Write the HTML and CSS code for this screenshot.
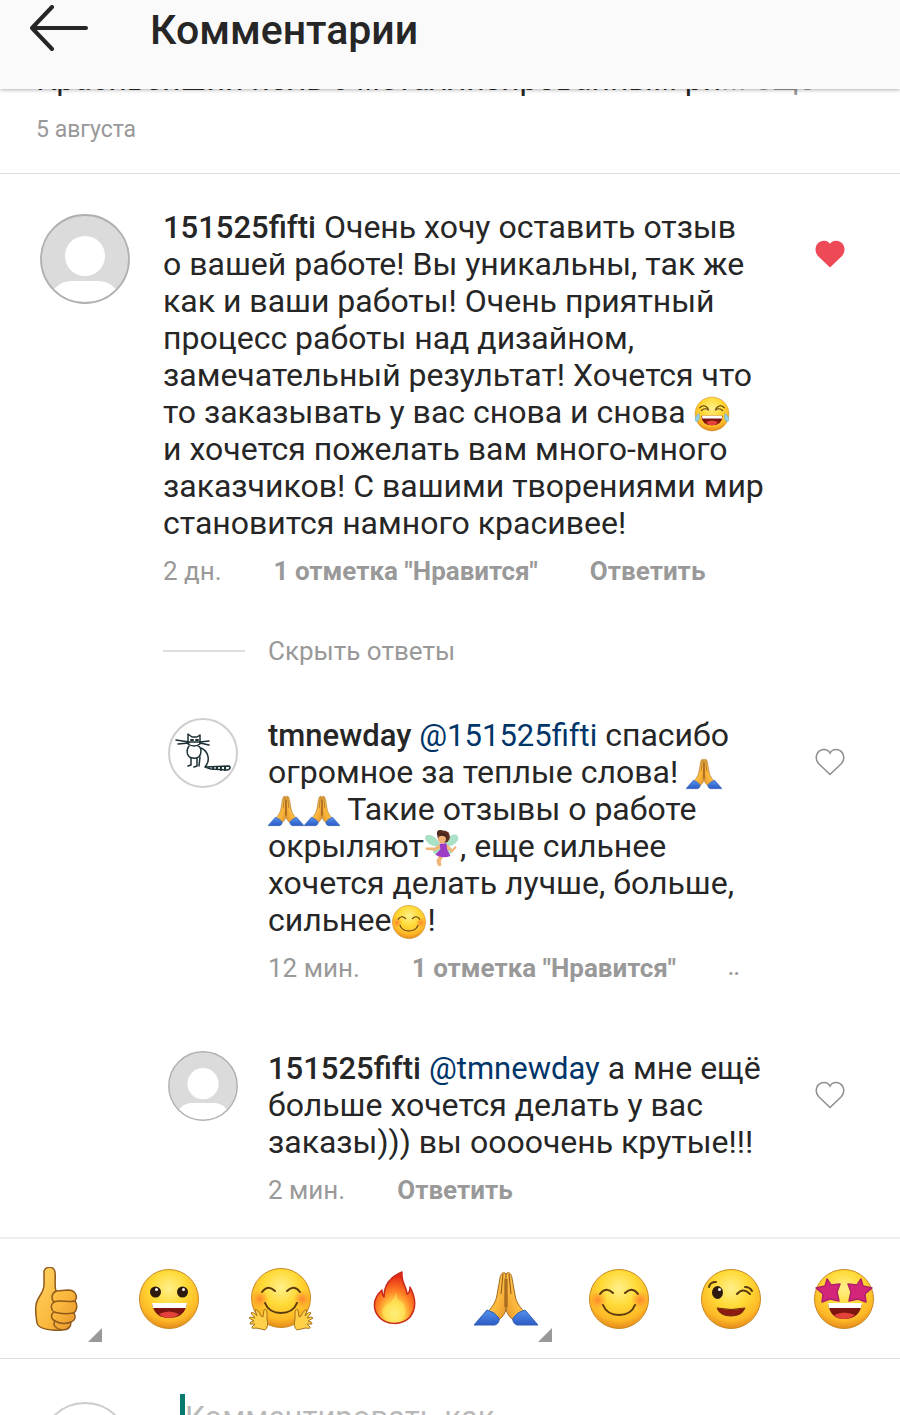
FILE: index.html
```html
<!DOCTYPE html>
<html lang="ru">
<head>
    <meta charset="UTF-8">
    <meta name="viewport" content="width=device-width, initial-scale=1.0">
    <title>Комментарии</title>
    <link rel="stylesheet" href="styles.css">
</head>
<body>
    <!-- Shared icons -->
    <svg class="sprite" aria-hidden="true">
        <defs>
            <radialGradient id="face" cx="50%" cy="32%" r="68%">
                <stop offset="0" stop-color="#fff08c"/>
                <stop offset="0.45" stop-color="#ffd935"/>
                <stop offset="0.8" stop-color="#fdb827"/>
                <stop offset="1" stop-color="#e58a1a"/>
            </radialGradient>
            <radialGradient id="blush">
                <stop offset="0" stop-color="#ff7a2c" stop-opacity="0.85"/>
                <stop offset="1" stop-color="#ff8c2c" stop-opacity="0"/>
            </radialGradient>
            <linearGradient id="skin" x1="0" y1="0" x2="1" y2="1">
                <stop offset="0" stop-color="#ffd465"/>
                <stop offset="0.6" stop-color="#fbb73c"/>
                <stop offset="1" stop-color="#e5932b"/>
            </linearGradient>
            <radialGradient id="flame" cx="50%" cy="82%" r="75%">
                <stop offset="0" stop-color="#fff9b0"/>
                <stop offset="0.3" stop-color="#ffd84a"/>
                <stop offset="0.58" stop-color="#ff8425"/>
                <stop offset="1" stop-color="#e52916"/>
            </radialGradient>
            <linearGradient id="sleeve" x1="0" y1="0" x2="0" y2="1">
                <stop offset="0" stop-color="#5591ee"/>
                <stop offset="1" stop-color="#2b5bc4"/>
            </linearGradient>
        </defs>

        <symbol id="person" viewBox="0 0 90 90">
            <clipPath id="round"><circle cx="45" cy="45" r="44"/></clipPath>
            <circle cx="45" cy="45" r="44" fill="#dbdbdb"/>
            <g clip-path="url(#round)" fill="#fff">
                <circle cx="45" cy="42" r="20"/>
                <path d="M10 82C16 70 24 67 32 67H58C66 67 74 70 80 82L70 94H20Z"/>
            </g>
            <circle cx="45" cy="45" r="44" fill="none" stroke="#b0b0b0" stroke-width="1.8"/>
        </symbol>

        <symbol id="cat" viewBox="0 0 70 70">
            <circle cx="35" cy="35" r="34" fill="#fff" stroke="#cfcfcf" stroke-width="2"/>
            <g fill="none" stroke="#1c2f35" stroke-width="1.5" stroke-linecap="round" stroke-linejoin="round">
                <path d="M20 26V16L24 19H29L32 17V26Q26 30 20 26Z"/>
                <path d="M8 22L21 24M10 26L21 25M41 23L32 24M41 27L32 25M21 24H32"/>
                <path d="M23 22H25M28 22H30" stroke-width="2"/>
                <path d="M21 28C17 34 20 40 25 40C30 41 33 38 33 33C33 30 31 28 30 28"/>
                <path d="M33 30C40 33 43 42 37 49L61 48C63 49 62 52 59 52L43 51L37 49"/>
                <path d="M23 40V47L20 48M29 40V48L26 49M32 39L31 48"/>
                <path d="M45 49V51M49 49V51M53 49V52M57 49V52" stroke-width="2"/>
            </g>
        </symbol>

        <symbol id="heart" viewBox="0 0 30 28">
            <path d="M15 26.500L3.500 15.500C-0.500 11 1 3.500 7 1.800C10.500 0.900 13.500 2.600 15 5.200C16.500 2.600 19.500 0.900 23 1.800C29 3.500 30.500 11 26.500 15.500Z"/>
        </symbol>

        <symbol id="joy" viewBox="0 0 64 64">
            <circle cx="32" cy="32" r="30" fill="url(#face)" stroke="#c98a22"/>
            <path d="M10 21Q18 13 25 22M39 22Q47 13 54 21M13 26Q19 20 26 25M38 25Q45 20 51 26" fill="none" stroke="#5b3a10" stroke-width="2" stroke-linecap="round"/>
            <path d="M13 35H51Q50 52 32 52Q14 52 13 35Z" fill="#7c1410"/>
            <path d="M21 47Q32 40 43 47Q38 52 32 52Q26 52 21 47Z" fill="#e2423a"/>
            <path d="M14 35H50V40H15Z" fill="#fff"/>
            <path d="M9 31C3 34 1 41 3 45C7 47 11 42 9 31ZM55 31C61 34 63 41 61 45C57 47 53 42 55 31Z" fill="#8fd0e6" stroke="#6bb2cc"/>
        </symbol>

        <symbol id="blushing" viewBox="0 0 64 64">
            <circle cx="32" cy="32" r="29.500" fill="url(#face)" stroke="#c98a22"/>
            <circle cx="11" cy="33" r="9" fill="url(#blush)"/>
            <circle cx="53" cy="33" r="9" fill="url(#blush)"/>
            <path d="M13 27Q19 19 26 26M38 26Q45 19 51 27M16 38Q20 48 32 48Q44 48 48 38" fill="none" stroke="#5b3a10" stroke-width="2" stroke-linecap="round"/>
        </symbol>

        <symbol id="grin" viewBox="0 0 64 64">
            <circle cx="32" cy="32" r="29.500" fill="url(#face)" stroke="#c98a22"/>
            <circle cx="18.500" cy="25" r="5.500" fill="#2c1a0e"/>
            <circle cx="45.500" cy="25" r="5.500" fill="#2c1a0e"/>
            <circle cx="19.500" cy="22.500" r="1.500" fill="#fff"/>
            <circle cx="46.500" cy="22.500" r="1.500" fill="#fff"/>
            <path d="M15 36H50Q48 51 32 51Q17 51 15 36Z" fill="#7c1410"/>
            <path d="M22 47Q32 42 42 47Q38 51 32 51Q26 51 22 47Z" fill="#e2423a"/>
            <path d="M15 36H50L49 41H16Z" fill="#fff"/>
        </symbol>

        <symbol id="hug" viewBox="0 0 64 64">
            <circle cx="32" cy="31" r="29.500" fill="url(#face)" stroke="#c98a22"/>
            <circle cx="11" cy="32" r="9" fill="url(#blush)"/>
            <circle cx="53" cy="32" r="9" fill="url(#blush)"/>
            <path d="M13 25Q19 17 26 24M38 24Q45 17 51 25M16 36Q20 46 32 46Q44 46 48 36" fill="none" stroke="#5b3a10" stroke-width="2" stroke-linecap="round"/>
            <g id="palm" fill="#ffd04a" stroke="#a8741c" stroke-linejoin="round">
                <path d="M12 62L7 61Q2 62 3 60L6 57L1 57Q0 55 5 54L0 51Q1 49 6 51L2 46Q4 44 8 49L6 43Q9 42 12 49L14 50L15 43Q18 41 18 46L18 52Q20 60 16 63Z"/>
            </g>
            <use href="#palm" transform="translate(64 0) scale(-1 1)"/>
        </symbol>

        <symbol id="wink" viewBox="0 0 64 64">
            <circle cx="32" cy="32" r="29.500" fill="url(#face)" stroke="#c98a22"/>
            <ellipse cx="18.500" cy="25.500" rx="5.500" ry="6.500" fill="#2c1a0e"/>
            <circle cx="20.500" cy="22.500" r="1.500" fill="#fff"/>
            <path d="M10 20Q11 15 17 15M38 27Q44 20 51 27M46 20Q51 20 53 24" fill="none" stroke="#5b3a10" stroke-width="2" stroke-linecap="round"/>
            <path d="M18 41Q32 44 46 41Q43 49 32 49Q21 49 18 41Z" fill="#8c1a10" stroke="#6d2a10"/>
        </symbol>

        <symbol id="starry" viewBox="0 0 64 64">
            <circle cx="32" cy="32" r="29.500" fill="url(#face)" stroke="#c98a22"/>
            <path id="star" d="M15 12L19 18L28 17L25 25L27 34L18 32L10 35L11 27L4 21L13 19Z" fill="#d3267a" stroke="#b01f68" stroke-width="1.5" stroke-linejoin="round"/>
            <use href="#star" transform="translate(64 0) scale(-1 1)"/>
            <path d="M16 36H50Q48 52 32 52Q18 52 16 36Z" fill="#7c1410"/>
            <path d="M22 48Q32 43 43 48Q38 52 32 52Q26 52 22 48Z" fill="#e2423a"/>
            <path d="M16 36H50L49 41H17Z" fill="#fff"/>
        </symbol>

        <symbol id="thumb" viewBox="0 0 64 64">
            <g fill="url(#skin)" stroke="#8f5a1c" stroke-width="1.500" stroke-linejoin="round">
                <path d="M20 4C22-1 30-1 31 5C32 12 30 18 32 24L44 23C52 23 54 30 51 34C54 38 53 43 50 46C52 50 51 54 47 55C47 60 44 63 38 63C27 64 14 62 13 56C12 50 11 44 12 38C13 30 20 26 20 18Z"/>
                <path d="M32 24C27 27 27 32 30 35C26 38 27 43 30 45C26 48 27 52 31 54C28 58 32 62 38 63" fill="none"/>
                <path d="M30 35C36 32 44 36 51 34M30 45C36 47 44 47 50 46M31 54C36 57 42 57 47 55" fill="none"/>
            </g>
        </symbol>

        <symbol id="fire" viewBox="0 0 64 64">
            <path d="M40 5C39 17 45 19 45 27C48 26 48 23 48 20C54 31 54 42 48 50C40 59 24 58 17 50C10 42 11 31 20 23C20 27 21 29 22 30C22 19 28 10 40 5Z" fill="url(#flame)" stroke="#c9281a" stroke-width="1.500" stroke-linejoin="round"/>
            <path d="M34 26C35 36 40 34 41 36C49 52 34 56 28 54C16 50 20 38 27 37C31 34 32 31 34 26Z" fill="#ffe65a" opacity="0.6"/>
        </symbol>

        <symbol id="pray" viewBox="0 0 64 64">
            <g id="hand">
                <path d="M31 6C28 5 27 7 26 11L23 28C22 36 16 42 14 45L25 53C29 49 32 46 32 40V7Z" fill="url(#skin)" stroke="#a16a21"/>
                <path d="M29 7L27 27M31 12V40" fill="none" stroke="#8c541b"/>
                <path d="M13 43L0 58H21Q26 56 25 51Q21 45 13 43Z" fill="url(#sleeve)" stroke="#3261b8"/>
            </g>
            <use href="#hand" transform="translate(64 0) scale(-1 1)"/>
        </symbol>

        <symbol id="fairy" viewBox="0 0 64 64">
            <path d="M28 26C18 6 0 6 3 16C7 26 18 28 26 29C16 31 14 40 20 42C27 42 30 36 32 30ZM36 26C46 4 62 6 60 16C57 26 48 27 40 29C50 30 53 38 47 42C40 43 37 36 36 30Z" fill="#a9e2c4" stroke="#8accae"/>
            <path d="M27 44L22 55L25 64H31L30 55L36 45ZM28 25L20 31L3 31V35L21 37L30 32ZM40 25L50 34L56 28L58 31L50 40L38 32Z" fill="#f0b678"/>
            <path d="M28 24H40L41 34L47 46Q34 52 20 44L29 34Z" fill="#9c3cc6"/>
            <circle cx="29" cy="6" r="6" fill="#46251a"/>
            <circle cx="35" cy="12" r="11" fill="#5b3020"/>
            <ellipse cx="32" cy="16" rx="7" ry="8" fill="#efb176"/>
            <path d="M24 14Q31 6 41 14L40 7L30 5Z" fill="#46251a"/>
        </symbol>
    </svg>

    <div class="app">
        <header class="top-bar">
            <button type="button" class="back" aria-label="Назад">
                <svg viewBox="0 0 60 46"><path d="M23 2L3 23L23 44M3 23H57"/></svg>
            </button>
            <h1>Комментарии</h1>
        </header>

        <section class="post-caption">
            <p>Красивейший ноль с металлизированным ри<span>... ещё</span></p>
            <time>5 августа</time>
        </section>

        <main class="comments">
            <article class="comment">
                <svg class="avatar"><use href="#person"/></svg>
                <div class="comment-body">
                    <p><b>151525fifti</b> Очень хочу оставить отзыв о&nbsp;вашей работе! Вы уникальны, так же как&nbsp;и ваши работы! Очень приятный процесс работы над дизайном, замечательный результат! Хочется что то&nbsp;заказывать у вас снова и снова <svg class="emoji"><use href="#joy"/></svg> и&nbsp;хочется пожелать вам много-много заказчиков! С вашими творениями мир становится намного красивее!</p>
                    <div class="meta">
                        <span>2 дн.</span>
                        <button type="button">1 отметка "Нравится"</button>
                        <button type="button">Ответить</button>
                    </div>
                </div>
                <button type="button" class="like liked" aria-label="Не нравится"><svg><use href="#heart"/></svg></button>
            </article>

            <button type="button" class="toggle-replies">Скрыть ответы</button>

            <article class="comment reply">
                <svg class="avatar"><use href="#cat"/></svg>
                <div class="comment-body">
                    <p><b>tmnewday</b> <a href="#">@151525fifti</a> спасибо огромное за теплые слова! <svg class="emoji"><use href="#pray"/></svg> <span class="pair"><svg class="emoji"><use href="#pray"/></svg><svg class="emoji"><use href="#pray"/></svg></span> Такие отзывы о работе окрыляют<svg class="emoji"><use href="#fairy"/></svg>, еще сильнее хочется делать лучше, больше, сильнее<svg class="emoji"><use href="#blushing"/></svg>!</p>
                    <div class="meta">
                        <span>12 мин.</span>
                        <button type="button">1 отметка "Нравится"</button>
                        <button type="button" class="more" aria-label="Ответить">..</button>
                    </div>
                </div>
                <button type="button" class="like" aria-label="Нравится"><svg><use href="#heart"/></svg></button>
            </article>

            <article class="comment reply">
                <svg class="avatar"><use href="#person"/></svg>
                <div class="comment-body">
                    <p><b>151525fifti</b> <a href="#">@tmnewday</a> а мне ещё больше хочется делать у вас заказы))) вы оооочень крутые!!!</p>
                    <div class="meta">
                        <span>2 мин.</span>
                        <button type="button">Ответить</button>
                    </div>
                </div>
                <button type="button" class="like" aria-label="Нравится"><svg><use href="#heart"/></svg></button>
            </article>
        </main>

        <nav class="quick-emoji" aria-label="Быстрые реакции">
            <button type="button" class="has-variants" aria-label="Палец вверх"><svg><use href="#thumb"/></svg></button>
            <button type="button" aria-label="Улыбка"><svg><use href="#grin"/></svg></button>
            <button type="button" aria-label="Обнимаю"><svg><use href="#hug"/></svg></button>
            <button type="button" aria-label="Огонь"><svg><use href="#fire"/></svg></button>
            <button type="button" class="has-variants" aria-label="Спасибо"><svg><use href="#pray"/></svg></button>
            <button type="button" aria-label="Румянец"><svg><use href="#blushing"/></svg></button>
            <button type="button" aria-label="Подмигивание"><svg><use href="#wink"/></svg></button>
            <button type="button" aria-label="Восторг"><svg><use href="#starry"/></svg></button>
        </nav>

        <form class="composer">
            <span class="my-avatar"></span>
            <input type="text" placeholder="Комментировать как" aria-label="Комментарий">
        </form>
    </div>
</body>
</html>
```
FILE: styles.css
```css
:root {
    --text: #262626;
    --muted: #999;
    --line: #dfdfdf;
    --link: #003569;
    --like: #ed4956;
}

* {
    margin: 0;
    padding: 0;
    box-sizing: border-box;
}

body {
    background: #fff;
    color: var(--text);
    font-family: Roboto, "Liberation Sans", sans-serif;
    font-size: 32px;
    line-height: 37px;
}

button {
    border: none;
    background: none;
    font: inherit;
    color: inherit;
    cursor: pointer;
}

a {
    color: var(--link);
    text-decoration: none;
}

svg {
    display: block;
}

.sprite {
    position: absolute;
    width: 0;
    height: 0;
}

.app {
    display: flex;
    flex-direction: column;
    height: 100vh;
    overflow: hidden;
}

.app > * {
    flex-shrink: 0;
}

/* Header */
.top-bar {
    display: flex;
    align-items: flex-start;
    gap: 61px;
    height: 89px;
    padding: 5px 29px;
    background: #fafafa;
    box-shadow: 0 1px 4px rgba(0, 0, 0, 0.3);
    z-index: 1;
}

.back svg {
    width: 60px;
    height: 46px;
    fill: none;
    stroke: var(--text);
    stroke-width: 4;
    stroke-linecap: round;
    stroke-linejoin: round;
}

.top-bar h1 {
    font-size: 41px;
    font-weight: 500;
    line-height: 50px;
}

/* Caption, scrolled under the header */
.post-caption {
    margin-top: -28px;
    padding: 0 36px 27px;
    border-bottom: 1px solid var(--line);
}

.post-caption p {
    white-space: nowrap;
}

.post-caption p span {
    color: var(--muted);
}

.post-caption time {
    display: block;
    margin-top: 16px;
    color: var(--muted);
    font-size: 23px;
    line-height: 32px;
}

/* Comments */
.comments {
    padding: 35px 55px 31px 40px;
}

.comment {
    display: grid;
    grid-template-columns: 90px 1fr 30px;
    column-gap: 33px;
}

.avatar {
    width: 90px;
    height: 90px;
    margin-top: 5px;
}

.comment-body {
    padding-right: 8px;
}

.comment-body b,
.comment-body a {
    font-size: 31px;
}

.comment-body b {
    font-weight: 500;
}

.emoji {
    display: inline-block;
    width: 36px;
    height: 36px;
    margin: -2px 0;
    vertical-align: -7px;
}

.pair {
    white-space: nowrap;
}

.meta {
    display: flex;
    gap: 52px;
    margin-top: 13px;
    color: var(--muted);
    font-size: 26px;
    line-height: 32px;
    white-space: nowrap;
}

.meta button {
    font-weight: 700;
}

.meta .more {
    font-size: 20px;
}

.like {
    align-self: start;
    margin-top: 31px;
}

.like svg {
    width: 30px;
    height: 28px;
    fill: none;
    stroke: #8e8e8e;
    stroke-width: 1.5;
}

.liked svg {
    fill: var(--like);
    stroke: var(--like);
}

.toggle-replies {
    display: flex;
    align-items: center;
    gap: 23px;
    margin: 48px 0 50px 123px;
    color: var(--muted);
    font-size: 26px;
    line-height: 32px;
}

.toggle-replies::before {
    content: "";
    width: 82px;
    height: 2px;
    background: var(--line);
}

.reply {
    grid-template-columns: 70px 1fr 30px;
    column-gap: 30px;
    padding-left: 128px;
}

.reply + .reply {
    margin-top: 66px;
}

.reply .avatar {
    width: 70px;
    height: 70px;
    margin-top: 1px;
}

/* Quick reactions */
.quick-emoji {
    display: grid;
    grid-template-columns: repeat(8, 1fr);
    height: 122px;
    border-top: 2px solid #eee;
    border-bottom: 1px solid var(--line);
}

.quick-emoji button {
    display: flex;
    align-items: center;
    justify-content: center;
    position: relative;
}

.quick-emoji svg {
    width: 64px;
    height: 64px;
}

.has-variants::after {
    content: "";
    position: absolute;
    right: 11px;
    bottom: 16px;
    border: 7px solid;
    border-color: transparent #999 #999 transparent;
}

/* Comment form */
.composer {
    display: flex;
    align-items: flex-start;
    gap: 50px;
    padding: 35px 40px;
}

.my-avatar {
    width: 90px;
    height: 90px;
    margin-top: 8px;
    border: 2px solid #ccc;
    border-radius: 50%;
}

.composer input {
    flex: 1;
    height: 46px;
    border: none;
    border-left: 5px solid #0b7a6e;
    outline: none;
    font: inherit;
    font-size: 31px;
}

.composer input::placeholder {
    color: #b8b8b8;
}
```
